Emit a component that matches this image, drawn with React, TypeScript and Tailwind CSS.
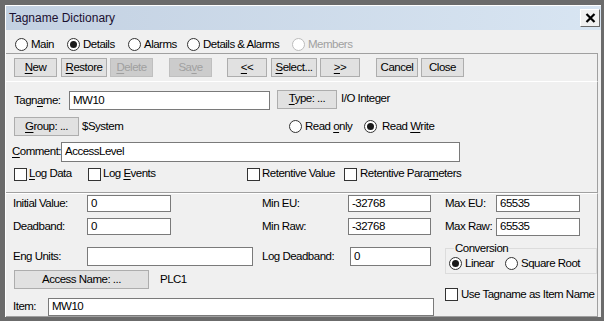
import React from "react";

const font = "font-['Liberation_Sans',Arial,sans-serif] text-[11.5px] tracking-[-0.5px] leading-none whitespace-nowrap";

const Radio = ({ checked = false, disabled = false }: { checked?: boolean; disabled?: boolean }) => (
  <span
    className={`inline-flex w-[13px] h-[13px] shrink-0 rounded-full border bg-white items-center justify-center ${
      disabled ? "border-[#bcbcbc]" : "border-[#333333]"
    }`}
  >
    {checked && <span className="w-[7px] h-[7px] rounded-full bg-[#1a1a1a]" />}
  </span>
);

const Check = () => <span className="inline-block w-[13px] h-[13px] shrink-0 border border-[#333333] bg-white" />;

const Opt = ({
  children,
  kind = "radio",
  checked = false,
  disabled = false,
  className = "",
  gap = "gap-[3px]",
}: {
  children: React.ReactNode;
  kind?: "radio" | "check";
  checked?: boolean;
  disabled?: boolean;
  className?: string;
  gap?: string;
}) => (
  <label className={`flex items-center ${gap} ${disabled ? "text-[#a0a0a0]" : ""} ${className}`}>
    {kind === "radio" ? <Radio checked={checked} disabled={disabled} /> : <Check />}
    <span>{children}</span>
  </label>
);

const Btn = ({
  children,
  w,
  disabled = false,
  className = "",
}: {
  children: React.ReactNode;
  w: string;
  disabled?: boolean;
  className?: string;
}) => (
  <div
    className={`${w} h-[19px] flex items-center justify-center border shrink-0 ${
      disabled ? "bg-[#cccccc] border-[#bfbfbf] text-[#a0a0a0]" : "bg-[#e1e1e1] border-[#adadad] text-black"
    } ${className}`}
  >
    <span>{children}</span>
  </div>
);

const Input = ({ w, value = "", h = "h-[19px]", className = "" }: { w: string; value?: string; h?: string; className?: string }) => (
  <div className={`${w} ${h} bg-white border border-[#7a7a7a] flex items-center pl-[3px] shrink-0 ${className}`}>{value}</div>
);

const U = ({ children }: { children: React.ReactNode }) => <span className="underline underline-offset-[2px]">{children}</span>;

export default function App() {
  return (
    <div className={`w-[604px] h-[321px] bg-[#6b6b6b] pl-[5px] pt-[5px] pr-[3px] pb-[4px] ${font}`}>
      <div className="h-full flex flex-col border-t border-l border-white bg-[#f0f0f0]">
        {/* title bar */}
        <div className="h-[24px] flex items-center justify-between bg-gradient-to-r from-[#c3d1e2] to-[#d8e5f2] pl-[3px] pr-[1px]">
          <span className="font-['Liberation_Sans',Arial,sans-serif] text-[12px] tracking-normal text-[#1b1030]">Tagname Dictionary</span>
          <div className="w-[20px] h-[18px] bg-[#f0f0f0] border border-t-white border-l-white border-r-[#6b6b6b] border-b-[#6b6b6b] flex items-center justify-center">
            <svg width="11" height="10" viewBox="0 0 11 10">
              <path d="M1.5 1 L9.5 9 M9.5 1 L1.5 9" stroke="#000" strokeWidth="2.2" />
            </svg>
          </div>
        </div>

        {/* view radios */}
        <div className="h-[23px] pt-[6px] flex items-center pl-[9px]">
          <Opt className="w-[52px]">Main</Opt>
          <Opt className="w-[61px]" checked>Details</Opt>
          <Opt className="w-[59px]">Alarms</Opt>
          <Opt className="w-[105px]">Details &amp; Alarms</Opt>
          <Opt disabled>Members</Opt>
        </div>

        {/* toolbar */}
        <div className="h-[29px] mr-[3px] border-t border-r border-[#a0a0a0] border-b border-b-white flex items-start pt-[4px] pl-[8px]">
          <Btn w="w-[43px]"><U>N</U>ew</Btn>
          <Btn w="w-[46px]" className="ml-[4px]"><U>R</U>estore</Btn>
          <Btn w="w-[43px]" className="ml-[3px]" disabled><U>D</U>elete</Btn>
          <Btn w="w-[43px]" className="ml-[16px]" disabled>Sa<U>v</U>e</Btn>
          <Btn w="w-[40px]" className="ml-[15px]"><U>&lt;</U>&lt;</Btn>
          <Btn w="w-[46px]" className="ml-[4px]"><U>S</U>elect...</Btn>
          <Btn w="w-[40px]" className="ml-[3px]"><U>&gt;</U>&gt;</Btn>
          <Btn w="w-[42px]" className="ml-[16px]">Cancel</Btn>
          <Btn w="w-[43px]" className="ml-[3px]">Close</Btn>
        </div>

        {/* upper section */}
        <div className="h-[111px] mr-[3px] border-r border-[#a0a0a0] border-b border-b-[#a0a0a0] flex flex-col pl-[8px]">
          <div className="mt-[9px] h-[19px] flex items-center">
            <span className="w-[55px]">Tagn<U>a</U>me:</span>
            <Input w="w-[201px]" value="MW10" />
            <Btn w="w-[60px]" className="ml-[7px] -mt-[3px]"><U>T</U>ype: ...</Btn>
            <span className="ml-[4px] -mt-[3px]">I/O Integer</span>
          </div>
          <div className="mt-[7px] h-[19px] flex items-center">
            <Btn w="w-[65px]"><U>G</U>roup: ...</Btn>
            <span className="ml-[3px] w-[207px]">$System</span>
            <Opt className="w-[75px]">Read <U>o</U>nly</Opt>
            <Opt checked gap="gap-[5px]">Read <U>W</U>rite</Opt>
          </div>
          <div className="mt-[6px] h-[20px] flex items-center -ml-[2px]">
            <span className="w-[49px]"><U>C</U>omment:</span>
            <Input w="w-[399px]" h="h-[20px]" value="AccessLevel" />
          </div>
          <div className="mt-[5px] h-[14px] flex items-center">
            <Opt kind="check" className="w-[74px]" gap="gap-[2px]"><U>L</U>og Data</Opt>
            <Opt kind="check" className="w-[159px]" gap="gap-[2px]">Log <U>E</U>vents</Opt>
            <Opt kind="check" className="w-[97px]" gap="gap-[2px]">Retentive Value</Opt>
            <Opt kind="check" gap="gap-[3px]">Retentive Para<U>m</U>eters</Opt>
          </div>
        </div>

        {/* lower section */}
        <div className="flex-1 mr-[3px] border-t border-t-white border-r border-[#a0a0a0] border-b border-b-[#a0a0a0] flex">
          <div className="w-[439px] flex flex-col pl-[7px]">
            <div className="mt-[1px] h-[17px] flex items-center">
              <span className="w-[74px]">Initial Value:</span>
              <Input w="w-[84px]" h="h-[17px]" value="0" />
              <span className="ml-[91px] w-[86px]">Min EU:</span>
              <Input w="w-[83px]" h="h-[17px]" value="-32768" />
            </div>
            <div className="mt-[6px] h-[17px] flex items-center">
              <span className="w-[74px]">Deadband:</span>
              <Input w="w-[84px]" h="h-[17px]" value="0" />
              <span className="ml-[91px] w-[86px]">Min Raw:</span>
              <Input w="w-[83px]" h="h-[17px]" value="-32768" />
            </div>
            <div className="mt-[12px] h-[19px] flex items-center">
              <span className="w-[74px]">Eng Units:</span>
              <Input w="w-[166px]" />
              <span className="ml-[9px] w-[88px]">Log Deadband:</span>
              <Input w="w-[81px]" value="0" />
            </div>
            <div className="mt-[5px] h-[17px] flex items-center">
              <Btn w="w-[135px]" className="h-[17px] ml-[1px]">Access Name: ...</Btn>
              <span className="ml-[11px]">PLC1</span>
            </div>
            <div className="mt-[10px] h-[18px] flex items-center">
              <span className="w-[35px]">Item:</span>
              <Input w="w-[386px]" h="h-[18px]" value="MW10" />
            </div>
          </div>
          <div className="flex-1 flex flex-col">
            <div className="mt-[1px] h-[17px] flex items-center">
              <span className="w-[51px]">Max EU:</span>
              <Input w="w-[84px]" h="h-[17px]" value="65535" />
            </div>
            <div className="mt-[6px] h-[18px] flex items-center">
              <span className="w-[51px]">Max Raw:</span>
              <Input w="w-[84px]" h="h-[18px]" value="65535" />
            </div>
            <div className="relative mt-[12px] h-[26px] border border-[#dcdcdc] flex items-center pt-[5px] pl-[3px]">
              <span className="absolute -top-[6px] left-[8px] px-[1px] bg-[#f0f0f0]">Conversion</span>
              <Opt checked>Linear</Opt>
              <Opt className="ml-[11px]">Square Root</Opt>
            </div>
            <Opt kind="check" className="mt-[14px]" gap="gap-[3px]">Use Tagname as Item Name</Opt>
          </div>
        </div>
      </div>
    </div>
  );
}
